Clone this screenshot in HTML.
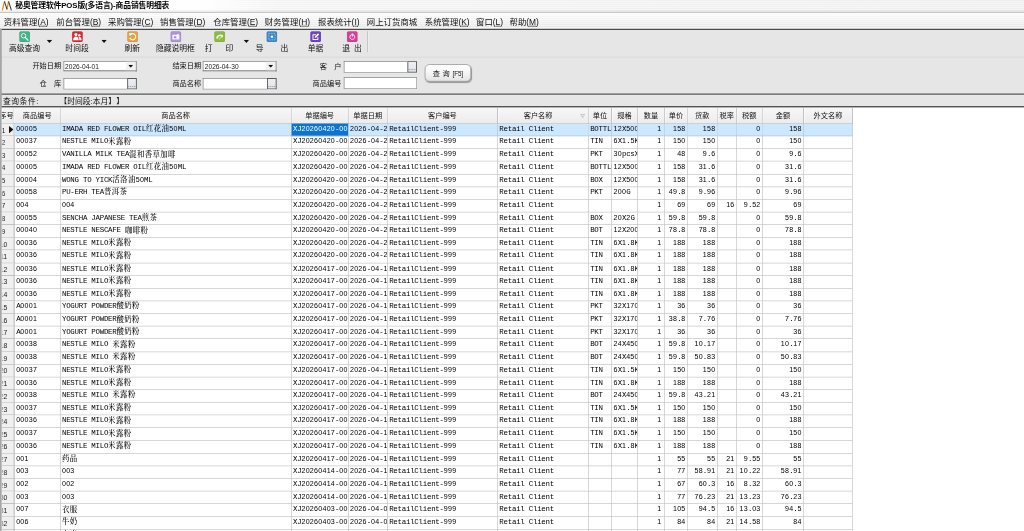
<!DOCTYPE html>
<html lang="zh-CN">
<head>
<meta charset="utf-8">
<title>秘奥管理软件POS版(多语言)-商品销售明细表</title>
<style>
html,body{margin:0;padding:0;background:#fff;}
body{width:1024px;height:531px;overflow:hidden;position:relative;}
#app{position:absolute;left:0;top:0;width:1706.67px;height:885px;transform:scale(0.6);transform-origin:0 0;overflow:hidden;background:#fff;filter:contrast(1);
 font-family:"Liberation Sans","Noto Sans CJK SC",sans-serif;color:#000;}
#app div,#app span{box-sizing:border-box;}
.abs{position:absolute;}
#title{left:0;top:0;width:100%;height:20.0px;background:linear-gradient(rgba(0,0,0,0) 0,rgba(0,0,0,0) 78%,rgba(0,0,0,.09) 100%),repeating-linear-gradient(rgba(255,255,255,0) 0,rgba(255,255,255,0) 1.7px,rgba(255,255,255,.5) 1.7px,rgba(255,255,255,.5) 3.4px),linear-gradient(to right,#fefefe 0,#fefefe 20%,#f3f3f4 27%,#eeeeef 100%);}
#title .txt{position:absolute;left:25.33px;top:0;height:20.0px;line-height:20.0px;font-size:13px;font-weight:bold;white-space:nowrap;letter-spacing:-0.2px;}
#menubar{left:0;top:20.0px;width:100%;height:28.17px;
 background:repeating-linear-gradient(rgba(255,255,255,0) 0,rgba(255,255,255,0) 1.7px,rgba(255,255,255,.55) 1.7px,rgba(255,255,255,.55) 3.4px),linear-gradient(#fdfdfd,#e4e4e4);}
#menubar .mi{position:absolute;top:0;height:28.17px;line-height:32.67px;font-size:14px;white-space:nowrap;color:#111;}
#menubar u{text-decoration:underline;text-underline-offset:2px;}
#tb{left:0;top:47.83px;width:100%;height:46.67px;background:#e6e6e6;}
.tbl{position:absolute;font-size:13px;white-space:pre;line-height:16px;height:16px;color:#111;}
.ico{position:absolute;width:18.33px;height:18.33px;border-radius:2.5px;}
.arr{position:absolute;width:9.6px;height:5.4px;background:#111;clip-path:polygon(0 0,100% 0,50% 100%);}
#flt{left:0;top:94.0px;width:100%;height:63.33px;background:#e6e6e6;}
.lab{position:absolute;font-size:12px;white-space:pre;text-align:right;line-height:16px;height:16px;color:#111;}
.inp{position:absolute;background:#fff;border:1px solid #6c6c6c;border-bottom-color:#858585;border-right-color:#858585;font-size:11px;line-height:16.4px;padding-left:2px;font-family:"Liberation Sans",sans-serif;color:#222;}
.btn{position:absolute;background:linear-gradient(#f4f4f4,#dcdcdc);border:1px solid #777;}
.btn .dots{position:absolute;left:0;right:0;bottom:3.4px;text-align:center;font-size:10px;font-weight:bold;line-height:8px;letter-spacing:0.4px;color:#6a7080;}
#cond{left:0;top:156.67px;width:100%;height:23.33px;background:#e6e6e6;font-size:13px;}
#cond span{position:absolute;top:0;line-height:23.17px;white-space:pre;color:#111;}
#lb{left:0;top:47.83px;width:2.5px;height:900px;background:#a6a6a6;}
#grid{left:0;top:180.0px;width:100%;height:800px;background:#fff;overflow:hidden;
 font-family:"Liberation Mono","Noto Serif CJK SC",monospace;font-size:12.4px;letter-spacing:-0.44px;color:#000;}
#grid .c{font-family:"Liberation Serif","Noto Serif CJK SC",serif;font-size:12.4px;letter-spacing:0.6px;font-weight:500;line-height:0;position:relative;top:0.4px;}
#grid .g{font-family:"Liberation Sans",sans-serif;font-size:11.8px;letter-spacing:0.44px;line-height:0;}
.hd{position:absolute;top:0;height:26.0px;background:linear-gradient(#f7f7f7,#ececec);border-right:1px solid #9c9c9c;border-bottom:1px solid #9c9c9c;
 font-family:"Liberation Sans","Noto Sans CJK SC",sans-serif;font-size:12px;letter-spacing:0;text-align:center;line-height:26.67px;white-space:nowrap;overflow:hidden;color:#111;box-shadow:inset 1px 0 0 #fff;}
.r{position:absolute;left:0;width:1420.83px;height:21.14px;}
.r i{font-style:normal;position:absolute;top:0;height:21.14px;line-height:16px;padding:1px 2.4px 0 2.6px;border-right:1px solid #bcbcbc;border-bottom:1px solid #bcbcbc;white-space:pre;overflow:hidden;box-sizing:border-box;}
.r i.rt{text-align:right;}
.r i.n{background:#f0f0f0;border-right:1px solid #909090;border-bottom:1px solid #a4a4a4;font-family:"Liberation Sans",sans-serif;font-size:11.5px;letter-spacing:0;padding:0;line-height:17px;color:#222;}
.r i.n s{text-decoration:none;position:absolute;left:1.9px;top:0;right:0;bottom:0;overflow:hidden;}
.r i.n b{font-weight:normal;position:absolute;left:1.5px;top:2.6px;transform:translateX(-50%);}
.r.sel i{background:#cce8ff;}
.r.sel i.n{background:#f0f0f0;}
.r.sel i.cur{background:#0b74d6;color:#fff;}
.tri{position:absolute;width:7.4px;height:12.4px;background:#111;clip-path:polygon(0 0,100% 50%,0 100%);}
</style>
</head>
<body>
<div id="app">

<div id="title" class="abs">
<svg class="abs" style="left:3.33px;top:1.0px" width="17.5" height="18.0" viewBox="0 0 20 20"><path d="M1 18.4 L5.1 1.2 M9.9 16.3 L12.9 1.2" fill="none" stroke="#f28a1e" stroke-width="2.5"/><path d="M5.1 1.2 L9.9 16.3 M12.9 1.2 L18.3 18.4" fill="none" stroke="#3c4048" stroke-width="2.1"/></svg>
<div class="txt">秘奥管理软件POS版(多语言)-商品销售明细表</div>
</div>
<div id="menubar" class="abs">
<span class="mi" style="left:6.33px">资料管理(<u>A</u>)</span>
<span class="mi" style="left:93.83px">前台管理(<u>B</u>)</span>
<span class="mi" style="left:180.0px">采购管理(<u>C</u>)</span>
<span class="mi" style="left:266.67px">销售管理(<u>D</u>)</span>
<span class="mi" style="left:355.5px">仓库管理(<u>E</u>)</span>
<span class="mi" style="left:441.33px">财务管理(<u>H</u>)</span>
<span class="mi" style="left:530.0px">报表统计(<u>I</u>)</span>
<span class="mi" style="left:611.33px">网上订货商城</span>
<span class="mi" style="left:708.0px">系统管理(<u>K</u>)</span>
<span class="mi" style="left:793.33px">窗口(<u>L</u>)</span>
<span class="mi" style="left:849.17px">帮助(<u>M</u>)</span>
</div>
<div id="tb" class="abs">
<svg class="ico" style="left:31.83px;top:4.33px" viewBox="0 0 18 18"><rect x="0.5" y="0.5" width="17" height="17" rx="2.2" fill="#3fb588" stroke="#34a278" stroke-width="1"/><circle cx="7.2" cy="7.4" r="3.7" fill="none" stroke="#fff" stroke-width="1.35"/><path d="M10 10.4 L14.2 14.4" stroke="#fff" stroke-width="2.1" stroke-linecap="round"/></svg>
<div class="tbl" style="left:5.0px;width:71.67px;top:25.13px;text-align:center">高级查询</div>
<div class="arr" style="left:77.67px;top:18.33px"></div>
<svg class="ico" style="left:120.17px;top:4.33px" viewBox="0 0 18 18"><rect x="0.5" y="0.5" width="17" height="17" rx="2.2" fill="#dc2631" stroke="#c41f2a" stroke-width="1"/><circle cx="6.4" cy="5.6" r="2.5" fill="#fff"/><path d="M1.8 14.8 C2 11 3.8 8.8 6.4 8.8 C9 8.8 10.8 11 11 14.8 Z" fill="#fff"/><circle cx="12" cy="6.6" r="2" fill="#fff"/><path d="M10.6 9.4 C13.8 8.6 15.6 10.6 15.8 14.8 L12 14.8 C12 12.6 11.6 10.8 10.6 9.4 Z" fill="#fff"/></svg>
<div class="tbl" style="left:99.33px;width:58.17px;top:25.13px;text-align:center">时间段</div>
<div class="arr" style="left:168.67px;top:18.33px"></div>
<svg class="ico" style="left:211.67px;top:4.33px" viewBox="0 0 18 18"><rect x="0.5" y="0.5" width="17" height="17" rx="2.2" fill="#dea447" stroke="#c88f33" stroke-width="1"/><path d="M5.6 5.2 A5 5 0 1 1 4.2 10.8" fill="none" stroke="#fff" stroke-width="1.8"/><path d="M3 2.8 L8.2 4 L4.4 7.8 Z" fill="#fff"/></svg>
<div class="tbl" style="left:198.33px;width:44.0px;top:25.13px;text-align:center">刷新</div>
<svg class="ico" style="left:283.83px;top:4.33px" viewBox="0 0 18 18"><rect x="0.5" y="0.5" width="17" height="17" rx="2.2" fill="#af95d5" stroke="#977cc3" stroke-width="1"/><path d="M3.2 6 H10.6 V4.4 H13.4 V6 H14.8 V13.6 H3.2 Z" fill="#fff" fill-opacity="0.9"/><circle cx="7.6" cy="9.8" r="2" fill="#af95d5"/></svg>
<div class="tbl" style="left:250.0px;width:84.67px;top:25.13px;text-align:center">隐藏说明框</div>
<svg class="ico" style="left:356.67px;top:4.33px" viewBox="0 0 18 18"><rect x="0.5" y="0.5" width="17" height="17" rx="2.2" fill="#8bbb3d" stroke="#78a62f" stroke-width="1"/><path d="M3.4 9.6 C4.6 5.6 11.4 4.2 14.6 6.8 L14.2 10 L11.6 10.4 L11.2 8.4 C9.6 7.8 7.8 8.2 6.6 9.2 L6.8 11.6 L4 12.6 Z" fill="#fff" fill-opacity="0.85"/><path d="M7.6 13.6 L11.8 9.6" stroke="#fff" stroke-width="1.1"/></svg>
<div class="tbl" style="left:331.67px;width:66.67px;top:25.13px;text-align:center">打<span style="margin-left:21.8px">印</span></div>
<div class="arr" style="left:405.83px;top:18.33px"></div>
<svg class="ico" style="left:444.0px;top:4.33px" viewBox="0 0 18 18"><rect x="0.5" y="0.5" width="17" height="17" rx="2.2" fill="#3f89ca" stroke="#3478b6" stroke-width="1"/><rect x="3.8" y="3.8" width="10.4" height="10.4" fill="none" stroke="#8fc0ea" stroke-width="1.4" stroke-dasharray="2.4 1.6"/><rect x="7.3" y="7.3" width="3.4" height="3.4" fill="#fff"/></svg>
<div class="tbl" style="left:416.67px;width:73.17px;top:25.13px;text-align:center">导<span style="margin-left:28.3px">出</span></div>
<svg class="ico" style="left:516.83px;top:4.33px" viewBox="0 0 18 18"><rect x="0.5" y="0.5" width="17" height="17" rx="2.2" fill="#6e41c5" stroke="#5d33b0" stroke-width="1"/><path d="M3.8 5 H9.4 V6.5 H5.3 V12.8 H11.8 V9.4 H13.3 V14.3 H3.8 Z" fill="#fff"/><path d="M7.4 11 L7.9 8.6 L12.8 3.4 L14.7 5.2 L9.8 10.4 Z" fill="#fff"/></svg>
<div class="tbl" style="left:503.16999999999996px;width:45.5px;top:25.13px;text-align:center">单据</div>
<svg class="ico" style="left:577.83px;top:4.33px" viewBox="0 0 18 18"><rect x="0.5" y="0.5" width="17" height="17" rx="2.2" fill="#d73e98" stroke="#c23088" stroke-width="1"/><path d="M7.3 5.5 A4.1 4.1 0 1 0 10.7 5.5" fill="none" stroke="#fff" stroke-width="1.5" stroke-linecap="round"/><path d="M9 4.2 V8.4" stroke="#fff" stroke-width="1.5" stroke-linecap="round"/></svg>
<div class="tbl" style="left:560.5px;width:52.5px;top:25.13px;text-align:center">退<span style="margin-left:6.8px">出</span></div>
<div class="abs" style="left:611.5px;top:3.83px;width:1.4px;height:35.67px;background:#b0b0b0;box-shadow:1.2px 0 0 #f4f4f4"></div>
</div>
<div id="flt" class="abs">
<div class="lab" style="left:22.0px;width:80px;top:8.4px">开始日期</div>
<div class="inp" style="left:105.5px;top:8.0px;width:122.33px;height:17.33px;border-bottom:2px solid #8a8a8a;border-right:2px solid #8a8a8a">2026-04-01</div>
<div class="btn" style="left:209.83px;top:9.0px;width:16.0px;height:14.329999999999998px;border:none;background:#f1f1f1"><div class="arr" style="left:3.7px;top:4.764999999999999px;width:8.6px;height:5px"></div></div>
<div class="lab" style="left:255.32999999999998px;width:80px;top:8.4px">结束日期</div>
<div class="inp" style="left:338.33px;top:8.0px;width:122.83px;height:17.33px;border-bottom:2px solid #8a8a8a;border-right:2px solid #8a8a8a">2026-04-30</div>
<div class="btn" style="left:443.17px;top:9.0px;width:16.0px;height:14.329999999999998px;border:none;background:#f1f1f1"><div class="arr" style="left:3.7px;top:4.764999999999999px;width:8.6px;height:5px"></div></div>
<div class="lab" style="left:489.0px;width:80px;top:9.23px">客<span style="margin-left:12px">户</span></div>
<div class="inp" style="left:572.5px;top:7.83px;width:122.33px;height:19.5px"></div>
<div class="btn" style="left:678.83px;top:7.83px;width:16.0px;height:19.5px;background:linear-gradient(#eff0f3,#dfe2e8);border:none;box-shadow:inset 0 0 0 1.5px #5a5a5a"><span class="dots">....</span></div>
<div class="lab" style="left:22.0px;width:80px;top:38.23px">仓<span style="margin-left:12px">库</span></div>
<div class="inp" style="left:105.5px;top:36.33px;width:122.33px;height:19.0px"></div>
<div class="btn" style="left:211.83px;top:36.33px;width:16.0px;height:19.0px;background:linear-gradient(#eff0f3,#dfe2e8);border:none;box-shadow:inset 0 0 0 1.5px #5a5a5a"><span class="dots">....</span></div>
<div class="lab" style="left:255.32999999999998px;width:80px;top:38.23px">商品名称</div>
<div class="inp" style="left:338.33px;top:36.33px;width:122.83px;height:19.0px"></div>
<div class="btn" style="left:445.17px;top:36.33px;width:16.0px;height:19.0px;background:linear-gradient(#eff0f3,#dfe2e8);border:none;box-shadow:inset 0 0 0 1.5px #5a5a5a"><span class="dots">....</span></div>
<div class="lab" style="left:489.0px;width:80px;top:37.57px">商品编号</div>
<div class="inp" style="left:572.5px;top:34.5px;width:122.33px;height:19.25px"></div>
<div class="abs" style="left:707.67px;top:13.33px;width:77.67px;height:28.33px;border:1.4px solid #868686;border-radius:8px;background:linear-gradient(#ffffff,#f4f4f4 55%,#e3e3e3);box-shadow:0.6px 1.4px 1.6px rgba(0,0,0,.35);text-align:center;font-size:12px;padding-top:1.8px;line-height:24.93px;white-space:pre;color:#111">查<span style="margin-left:4.2px">询</span><span style="font-size:10.5px;letter-spacing:-0.2px;margin-left:4.6px;position:relative;top:-0.6px">[F5]</span></div>
</div>
<div id="cond" class="abs"><span style="left:4.83px;letter-spacing:0.9px">查询条件:</span><span style="left:99.0px;text-spacing-trim:space-all">【时间段:本月】】</span></div>
<div class="abs" style="left:0;top:19.5px;width:100%;height:1.67px;background:#a4a4a4"></div>
<div class="abs" style="left:0;top:47.67px;width:100%;height:2.17px;background:#484848"></div>
<div class="abs" style="left:0;top:93.5px;width:100%;height:2.0px;background:#d9d9d9"></div>
<div class="abs" style="left:0;top:155.75px;width:100%;height:2.08px;background:#3a3a3a"></div>
<div class="abs" style="left:0;top:157.83px;width:100%;height:1.0px;background:#f0f0f0"></div>
<div class="abs" style="left:0;top:177.0px;width:100%;height:2.0px;background:#303030"></div>
<div class="abs" style="left:0;top:179.0px;width:100%;height:1.0px;background:#c4c4c4"></div>
<div id="lb" class="abs"></div>
<div id="grid" class="abs">
<div class="abs" style="left:0;top:0;width:2.5px;height:800px;background:#a6a6a6"></div>
<div class="hd" style="left:2.5px;width:21.83px;text-align:right;direction:rtl;padding-right:0.5px">序号</div>
<div class="hd" style="left:24.33px;width:76.33px">商品编号</div>
<div class="hd" style="left:100.67px;width:385.17px">商品名称</div>
<div class="hd" style="left:485.83px;width:94.83px">单据编号</div>
<div class="hd" style="left:580.67px;width:65.33px">单据日期</div>
<div class="hd" style="left:646.0px;width:183.67px">客户编号</div>
<div class="hd" style="left:829.67px;width:151.33px;padding-right:16px">客户名称<svg class="abs" style="right:5px;top:8.6px" width="8" height="8" viewBox="0 0 8 8"><path d="M0.8 1.6 H7.2 L4 7 Z" fill="none" stroke="#a2a2a2" stroke-width="0.9"/></svg></div>
<div class="hd" style="left:981.0px;width:39.0px">单位</div>
<div class="hd" style="left:1020.0px;width:42.67px">规格</div>
<div class="hd" style="left:1062.67px;width:45.33px">数量</div>
<div class="hd" style="left:1108.0px;width:38.0px">单价</div>
<div class="hd" style="left:1146.0px;width:49.83px">货款</div>
<div class="hd" style="left:1195.83px;width:31.83px">税率</div>
<div class="hd" style="left:1227.67px;width:43.33px">税额</div>
<div class="hd" style="left:1271.0px;width:68.67px">金额</div>
<div class="hd" style="left:1339.67px;width:81.5px">外文名称</div>
<div class="r sel" style="top:26.0px">
<i class="n" style="left:2.5px;width:21.83px"><s><b>1</b></s><span class="tri" style="left:12.5px;top:3.8px"></span></i>
<i style="left:24.33px;width:76.33px"><span class="g">00005</span></i>
<i style="left:100.67px;width:385.17px">IMADA RED FLOWER OIL<span class="c">红花油</span><span class="g">50</span>ML</i>
<i class="cur" style="left:485.83px;width:94.83px">XJ<span class="g">20260420</span>-<span class="g">0001</span></i>
<i style="left:580.67px;width:65.33px"><span class="g">2026</span>-<span class="g">04</span>-<span class="g">20</span></i>
<i style="left:646.0px;width:183.67px">RetailClient-<span class="g">999</span></i>
<i style="left:829.67px;width:151.33px">Retail Client</i>
<i style="left:981.0px;width:39.0px">BOTTLE</i>
<i style="left:1020.0px;width:42.67px"><span class="g">12</span>X<span class="g">500</span>ML</i>
<i class="rt" style="left:1062.67px;width:45.33px;padding-right:4.4px"><span class="g">1</span></i>
<i class="rt" style="left:1108.0px;width:38.0px"><span class="g">158</span></i>
<i class="rt" style="left:1146.0px;width:49.83px"><span class="g">158</span></i>
<i class="rt" style="left:1195.83px;width:31.83px"></i>
<i class="rt" style="left:1227.67px;width:43.33px"><span class="g">0</span></i>
<i class="rt" style="left:1271.0px;width:68.67px"><span class="g">158</span></i>
<i style="left:1339.67px;width:81.5px"></i>
</div>
<div class="r" style="top:47.14px">
<i class="n" style="left:2.5px;width:21.83px"><s><b>2</b></s></i>
<i style="left:24.33px;width:76.33px"><span class="g">00037</span></i>
<i style="left:100.67px;width:385.17px">NESTLE MILO<span class="c">米露粉</span></i>
<i style="left:485.83px;width:94.83px">XJ<span class="g">20260420</span>-<span class="g">0001</span></i>
<i style="left:580.67px;width:65.33px"><span class="g">2026</span>-<span class="g">04</span>-<span class="g">20</span></i>
<i style="left:646.0px;width:183.67px">RetailClient-<span class="g">999</span></i>
<i style="left:829.67px;width:151.33px">Retail Client</i>
<i style="left:981.0px;width:39.0px">TIN</i>
<i style="left:1020.0px;width:42.67px"><span class="g">6</span>X<span class="g">1</span>.<span class="g">5</span>KG</i>
<i class="rt" style="left:1062.67px;width:45.33px;padding-right:4.4px"><span class="g">1</span></i>
<i class="rt" style="left:1108.0px;width:38.0px"><span class="g">150</span></i>
<i class="rt" style="left:1146.0px;width:49.83px"><span class="g">150</span></i>
<i class="rt" style="left:1195.83px;width:31.83px"></i>
<i class="rt" style="left:1227.67px;width:43.33px"><span class="g">0</span></i>
<i class="rt" style="left:1271.0px;width:68.67px"><span class="g">150</span></i>
<i style="left:1339.67px;width:81.5px"></i>
</div>
<div class="r" style="top:68.28px">
<i class="n" style="left:2.5px;width:21.83px"><s><b>3</b></s></i>
<i style="left:24.33px;width:76.33px"><span class="g">00052</span></i>
<i style="left:100.67px;width:385.17px">VANILLA MILK TEA<span class="c">混和香草加啡</span></i>
<i style="left:485.83px;width:94.83px">XJ<span class="g">20260420</span>-<span class="g">0001</span></i>
<i style="left:580.67px;width:65.33px"><span class="g">2026</span>-<span class="g">04</span>-<span class="g">20</span></i>
<i style="left:646.0px;width:183.67px">RetailClient-<span class="g">999</span></i>
<i style="left:829.67px;width:151.33px">Retail Client</i>
<i style="left:981.0px;width:39.0px">PKT</i>
<i style="left:1020.0px;width:42.67px"><span class="g">30</span>pcsX<span class="g">20</span>G</i>
<i class="rt" style="left:1062.67px;width:45.33px;padding-right:4.4px"><span class="g">1</span></i>
<i class="rt" style="left:1108.0px;width:38.0px"><span class="g">48</span></i>
<i class="rt" style="left:1146.0px;width:49.83px"><span class="g">9</span>.<span class="g">6</span></i>
<i class="rt" style="left:1195.83px;width:31.83px"></i>
<i class="rt" style="left:1227.67px;width:43.33px"><span class="g">0</span></i>
<i class="rt" style="left:1271.0px;width:68.67px"><span class="g">9</span>.<span class="g">6</span></i>
<i style="left:1339.67px;width:81.5px"></i>
</div>
<div class="r" style="top:89.42px">
<i class="n" style="left:2.5px;width:21.83px"><s><b>4</b></s></i>
<i style="left:24.33px;width:76.33px"><span class="g">00005</span></i>
<i style="left:100.67px;width:385.17px">IMADA RED FLOWER OIL<span class="c">红花油</span><span class="g">50</span>ML</i>
<i style="left:485.83px;width:94.83px">XJ<span class="g">20260420</span>-<span class="g">0002</span></i>
<i style="left:580.67px;width:65.33px"><span class="g">2026</span>-<span class="g">04</span>-<span class="g">20</span></i>
<i style="left:646.0px;width:183.67px">RetailClient-<span class="g">999</span></i>
<i style="left:829.67px;width:151.33px">Retail Client</i>
<i style="left:981.0px;width:39.0px">BOTTLE</i>
<i style="left:1020.0px;width:42.67px"><span class="g">12</span>X<span class="g">500</span>ML</i>
<i class="rt" style="left:1062.67px;width:45.33px;padding-right:4.4px"><span class="g">1</span></i>
<i class="rt" style="left:1108.0px;width:38.0px"><span class="g">158</span></i>
<i class="rt" style="left:1146.0px;width:49.83px"><span class="g">31</span>.<span class="g">6</span></i>
<i class="rt" style="left:1195.83px;width:31.83px"></i>
<i class="rt" style="left:1227.67px;width:43.33px"><span class="g">0</span></i>
<i class="rt" style="left:1271.0px;width:68.67px"><span class="g">31</span>.<span class="g">6</span></i>
<i style="left:1339.67px;width:81.5px"></i>
</div>
<div class="r" style="top:110.57px">
<i class="n" style="left:2.5px;width:21.83px"><s><b>5</b></s></i>
<i style="left:24.33px;width:76.33px"><span class="g">00004</span></i>
<i style="left:100.67px;width:385.17px">WONG TO YICK<span class="c">活洛油</span><span class="g">50</span>ML</i>
<i style="left:485.83px;width:94.83px">XJ<span class="g">20260420</span>-<span class="g">0002</span></i>
<i style="left:580.67px;width:65.33px"><span class="g">2026</span>-<span class="g">04</span>-<span class="g">20</span></i>
<i style="left:646.0px;width:183.67px">RetailClient-<span class="g">999</span></i>
<i style="left:829.67px;width:151.33px">Retail Client</i>
<i style="left:981.0px;width:39.0px">BOX</i>
<i style="left:1020.0px;width:42.67px"><span class="g">12</span>X<span class="g">500</span>ML</i>
<i class="rt" style="left:1062.67px;width:45.33px;padding-right:4.4px"><span class="g">1</span></i>
<i class="rt" style="left:1108.0px;width:38.0px"><span class="g">158</span></i>
<i class="rt" style="left:1146.0px;width:49.83px"><span class="g">31</span>.<span class="g">6</span></i>
<i class="rt" style="left:1195.83px;width:31.83px"></i>
<i class="rt" style="left:1227.67px;width:43.33px"><span class="g">0</span></i>
<i class="rt" style="left:1271.0px;width:68.67px"><span class="g">31</span>.<span class="g">6</span></i>
<i style="left:1339.67px;width:81.5px"></i>
</div>
<div class="r" style="top:131.71px">
<i class="n" style="left:2.5px;width:21.83px"><s><b>6</b></s></i>
<i style="left:24.33px;width:76.33px"><span class="g">00058</span></i>
<i style="left:100.67px;width:385.17px">PU-ERH TEA<span class="c">普洱茶</span></i>
<i style="left:485.83px;width:94.83px">XJ<span class="g">20260420</span>-<span class="g">0002</span></i>
<i style="left:580.67px;width:65.33px"><span class="g">2026</span>-<span class="g">04</span>-<span class="g">20</span></i>
<i style="left:646.0px;width:183.67px">RetailClient-<span class="g">999</span></i>
<i style="left:829.67px;width:151.33px">Retail Client</i>
<i style="left:981.0px;width:39.0px">PKT</i>
<i style="left:1020.0px;width:42.67px"><span class="g">200</span>G</i>
<i class="rt" style="left:1062.67px;width:45.33px;padding-right:4.4px"><span class="g">1</span></i>
<i class="rt" style="left:1108.0px;width:38.0px"><span class="g">49</span>.<span class="g">8</span></i>
<i class="rt" style="left:1146.0px;width:49.83px"><span class="g">9</span>.<span class="g">96</span></i>
<i class="rt" style="left:1195.83px;width:31.83px"></i>
<i class="rt" style="left:1227.67px;width:43.33px"><span class="g">0</span></i>
<i class="rt" style="left:1271.0px;width:68.67px"><span class="g">9</span>.<span class="g">96</span></i>
<i style="left:1339.67px;width:81.5px"></i>
</div>
<div class="r" style="top:152.85px">
<i class="n" style="left:2.5px;width:21.83px"><s><b>7</b></s></i>
<i style="left:24.33px;width:76.33px"><span class="g">004</span></i>
<i style="left:100.67px;width:385.17px"><span class="g">004</span></i>
<i style="left:485.83px;width:94.83px">XJ<span class="g">20260420</span>-<span class="g">0003</span></i>
<i style="left:580.67px;width:65.33px"><span class="g">2026</span>-<span class="g">04</span>-<span class="g">20</span></i>
<i style="left:646.0px;width:183.67px">RetailClient-<span class="g">999</span></i>
<i style="left:829.67px;width:151.33px">Retail Client</i>
<i style="left:981.0px;width:39.0px"></i>
<i style="left:1020.0px;width:42.67px"></i>
<i class="rt" style="left:1062.67px;width:45.33px;padding-right:4.4px"><span class="g">1</span></i>
<i class="rt" style="left:1108.0px;width:38.0px"><span class="g">69</span></i>
<i class="rt" style="left:1146.0px;width:49.83px"><span class="g">69</span></i>
<i class="rt" style="left:1195.83px;width:31.83px"><span class="g">16</span></i>
<i class="rt" style="left:1227.67px;width:43.33px"><span class="g">9</span>.<span class="g">52</span></i>
<i class="rt" style="left:1271.0px;width:68.67px"><span class="g">69</span></i>
<i style="left:1339.67px;width:81.5px"></i>
</div>
<div class="r" style="top:173.99px">
<i class="n" style="left:2.5px;width:21.83px"><s><b>8</b></s></i>
<i style="left:24.33px;width:76.33px"><span class="g">00055</span></i>
<i style="left:100.67px;width:385.17px">SENCHA JAPANESE TEA<span class="c">煎茶</span></i>
<i style="left:485.83px;width:94.83px">XJ<span class="g">20260420</span>-<span class="g">0004</span></i>
<i style="left:580.67px;width:65.33px"><span class="g">2026</span>-<span class="g">04</span>-<span class="g">20</span></i>
<i style="left:646.0px;width:183.67px">RetailClient-<span class="g">999</span></i>
<i style="left:829.67px;width:151.33px">Retail Client</i>
<i style="left:981.0px;width:39.0px">BOX</i>
<i style="left:1020.0px;width:42.67px"><span class="g">20</span>X<span class="g">2</span>G</i>
<i class="rt" style="left:1062.67px;width:45.33px;padding-right:4.4px"><span class="g">1</span></i>
<i class="rt" style="left:1108.0px;width:38.0px"><span class="g">59</span>.<span class="g">8</span></i>
<i class="rt" style="left:1146.0px;width:49.83px"><span class="g">59</span>.<span class="g">8</span></i>
<i class="rt" style="left:1195.83px;width:31.83px"></i>
<i class="rt" style="left:1227.67px;width:43.33px"><span class="g">0</span></i>
<i class="rt" style="left:1271.0px;width:68.67px"><span class="g">59</span>.<span class="g">8</span></i>
<i style="left:1339.67px;width:81.5px"></i>
</div>
<div class="r" style="top:195.13px">
<i class="n" style="left:2.5px;width:21.83px"><s><b>9</b></s></i>
<i style="left:24.33px;width:76.33px"><span class="g">00040</span></i>
<i style="left:100.67px;width:385.17px">NESTLE NESCAFE <span class="c">咖啡粉</span></i>
<i style="left:485.83px;width:94.83px">XJ<span class="g">20260420</span>-<span class="g">0004</span></i>
<i style="left:580.67px;width:65.33px"><span class="g">2026</span>-<span class="g">04</span>-<span class="g">20</span></i>
<i style="left:646.0px;width:183.67px">RetailClient-<span class="g">999</span></i>
<i style="left:829.67px;width:151.33px">Retail Client</i>
<i style="left:981.0px;width:39.0px">BOT</i>
<i style="left:1020.0px;width:42.67px"><span class="g">12</span>X<span class="g">200</span>G</i>
<i class="rt" style="left:1062.67px;width:45.33px;padding-right:4.4px"><span class="g">1</span></i>
<i class="rt" style="left:1108.0px;width:38.0px"><span class="g">78</span>.<span class="g">8</span></i>
<i class="rt" style="left:1146.0px;width:49.83px"><span class="g">78</span>.<span class="g">8</span></i>
<i class="rt" style="left:1195.83px;width:31.83px"></i>
<i class="rt" style="left:1227.67px;width:43.33px"><span class="g">0</span></i>
<i class="rt" style="left:1271.0px;width:68.67px"><span class="g">78</span>.<span class="g">8</span></i>
<i style="left:1339.67px;width:81.5px"></i>
</div>
<div class="r" style="top:216.27px">
<i class="n" style="left:2.5px;width:21.83px"><s><b>10</b></s></i>
<i style="left:24.33px;width:76.33px"><span class="g">00036</span></i>
<i style="left:100.67px;width:385.17px">NESTLE MILO<span class="c">米露粉</span></i>
<i style="left:485.83px;width:94.83px">XJ<span class="g">20260420</span>-<span class="g">0005</span></i>
<i style="left:580.67px;width:65.33px"><span class="g">2026</span>-<span class="g">04</span>-<span class="g">20</span></i>
<i style="left:646.0px;width:183.67px">RetailClient-<span class="g">999</span></i>
<i style="left:829.67px;width:151.33px">Retail Client</i>
<i style="left:981.0px;width:39.0px">TIN</i>
<i style="left:1020.0px;width:42.67px"><span class="g">6</span>X<span class="g">1</span>.<span class="g">8</span>KG</i>
<i class="rt" style="left:1062.67px;width:45.33px;padding-right:4.4px"><span class="g">1</span></i>
<i class="rt" style="left:1108.0px;width:38.0px"><span class="g">188</span></i>
<i class="rt" style="left:1146.0px;width:49.83px"><span class="g">188</span></i>
<i class="rt" style="left:1195.83px;width:31.83px"></i>
<i class="rt" style="left:1227.67px;width:43.33px"><span class="g">0</span></i>
<i class="rt" style="left:1271.0px;width:68.67px"><span class="g">188</span></i>
<i style="left:1339.67px;width:81.5px"></i>
</div>
<div class="r" style="top:237.42px">
<i class="n" style="left:2.5px;width:21.83px"><s><b>11</b></s></i>
<i style="left:24.33px;width:76.33px"><span class="g">00036</span></i>
<i style="left:100.67px;width:385.17px">NESTLE MILO<span class="c">米露粉</span></i>
<i style="left:485.83px;width:94.83px">XJ<span class="g">20260420</span>-<span class="g">0006</span></i>
<i style="left:580.67px;width:65.33px"><span class="g">2026</span>-<span class="g">04</span>-<span class="g">20</span></i>
<i style="left:646.0px;width:183.67px">RetailClient-<span class="g">999</span></i>
<i style="left:829.67px;width:151.33px">Retail Client</i>
<i style="left:981.0px;width:39.0px">TIN</i>
<i style="left:1020.0px;width:42.67px"><span class="g">6</span>X<span class="g">1</span>.<span class="g">8</span>KG</i>
<i class="rt" style="left:1062.67px;width:45.33px;padding-right:4.4px"><span class="g">1</span></i>
<i class="rt" style="left:1108.0px;width:38.0px"><span class="g">188</span></i>
<i class="rt" style="left:1146.0px;width:49.83px"><span class="g">188</span></i>
<i class="rt" style="left:1195.83px;width:31.83px"></i>
<i class="rt" style="left:1227.67px;width:43.33px"><span class="g">0</span></i>
<i class="rt" style="left:1271.0px;width:68.67px"><span class="g">188</span></i>
<i style="left:1339.67px;width:81.5px"></i>
</div>
<div class="r" style="top:258.56px">
<i class="n" style="left:2.5px;width:21.83px"><s><b>12</b></s></i>
<i style="left:24.33px;width:76.33px"><span class="g">00036</span></i>
<i style="left:100.67px;width:385.17px">NESTLE MILO<span class="c">米露粉</span></i>
<i style="left:485.83px;width:94.83px">XJ<span class="g">20260417</span>-<span class="g">0001</span></i>
<i style="left:580.67px;width:65.33px"><span class="g">2026</span>-<span class="g">04</span>-<span class="g">17</span></i>
<i style="left:646.0px;width:183.67px">RetailClient-<span class="g">999</span></i>
<i style="left:829.67px;width:151.33px">Retail Client</i>
<i style="left:981.0px;width:39.0px">TIN</i>
<i style="left:1020.0px;width:42.67px"><span class="g">6</span>X<span class="g">1</span>.<span class="g">8</span>KG</i>
<i class="rt" style="left:1062.67px;width:45.33px;padding-right:4.4px"><span class="g">1</span></i>
<i class="rt" style="left:1108.0px;width:38.0px"><span class="g">188</span></i>
<i class="rt" style="left:1146.0px;width:49.83px"><span class="g">188</span></i>
<i class="rt" style="left:1195.83px;width:31.83px"></i>
<i class="rt" style="left:1227.67px;width:43.33px"><span class="g">0</span></i>
<i class="rt" style="left:1271.0px;width:68.67px"><span class="g">188</span></i>
<i style="left:1339.67px;width:81.5px"></i>
</div>
<div class="r" style="top:279.7px">
<i class="n" style="left:2.5px;width:21.83px"><s><b>13</b></s></i>
<i style="left:24.33px;width:76.33px"><span class="g">00036</span></i>
<i style="left:100.67px;width:385.17px">NESTLE MILO<span class="c">米露粉</span></i>
<i style="left:485.83px;width:94.83px">XJ<span class="g">20260417</span>-<span class="g">0002</span></i>
<i style="left:580.67px;width:65.33px"><span class="g">2026</span>-<span class="g">04</span>-<span class="g">17</span></i>
<i style="left:646.0px;width:183.67px">RetailClient-<span class="g">999</span></i>
<i style="left:829.67px;width:151.33px">Retail Client</i>
<i style="left:981.0px;width:39.0px">TIN</i>
<i style="left:1020.0px;width:42.67px"><span class="g">6</span>X<span class="g">1</span>.<span class="g">8</span>KG</i>
<i class="rt" style="left:1062.67px;width:45.33px;padding-right:4.4px"><span class="g">1</span></i>
<i class="rt" style="left:1108.0px;width:38.0px"><span class="g">188</span></i>
<i class="rt" style="left:1146.0px;width:49.83px"><span class="g">188</span></i>
<i class="rt" style="left:1195.83px;width:31.83px"></i>
<i class="rt" style="left:1227.67px;width:43.33px"><span class="g">0</span></i>
<i class="rt" style="left:1271.0px;width:68.67px"><span class="g">188</span></i>
<i style="left:1339.67px;width:81.5px"></i>
</div>
<div class="r" style="top:300.84px">
<i class="n" style="left:2.5px;width:21.83px"><s><b>14</b></s></i>
<i style="left:24.33px;width:76.33px"><span class="g">00036</span></i>
<i style="left:100.67px;width:385.17px">NESTLE MILO<span class="c">米露粉</span></i>
<i style="left:485.83px;width:94.83px">XJ<span class="g">20260417</span>-<span class="g">0003</span></i>
<i style="left:580.67px;width:65.33px"><span class="g">2026</span>-<span class="g">04</span>-<span class="g">17</span></i>
<i style="left:646.0px;width:183.67px">RetailClient-<span class="g">999</span></i>
<i style="left:829.67px;width:151.33px">Retail Client</i>
<i style="left:981.0px;width:39.0px">TIN</i>
<i style="left:1020.0px;width:42.67px"><span class="g">6</span>X<span class="g">1</span>.<span class="g">8</span>KG</i>
<i class="rt" style="left:1062.67px;width:45.33px;padding-right:4.4px"><span class="g">1</span></i>
<i class="rt" style="left:1108.0px;width:38.0px"><span class="g">188</span></i>
<i class="rt" style="left:1146.0px;width:49.83px"><span class="g">188</span></i>
<i class="rt" style="left:1195.83px;width:31.83px"></i>
<i class="rt" style="left:1227.67px;width:43.33px"><span class="g">0</span></i>
<i class="rt" style="left:1271.0px;width:68.67px"><span class="g">188</span></i>
<i style="left:1339.67px;width:81.5px"></i>
</div>
<div class="r" style="top:321.98px">
<i class="n" style="left:2.5px;width:21.83px"><s><b>15</b></s></i>
<i style="left:24.33px;width:76.33px">A<span class="g">0001</span></i>
<i style="left:100.67px;width:385.17px">YOGURT POWDER<span class="c">酸奶粉</span></i>
<i style="left:485.83px;width:94.83px">XJ<span class="g">20260417</span>-<span class="g">0004</span></i>
<i style="left:580.67px;width:65.33px"><span class="g">2026</span>-<span class="g">04</span>-<span class="g">17</span></i>
<i style="left:646.0px;width:183.67px">RetailClient-<span class="g">999</span></i>
<i style="left:829.67px;width:151.33px">Retail Client</i>
<i style="left:981.0px;width:39.0px">PKT</i>
<i style="left:1020.0px;width:42.67px"><span class="g">32</span>X<span class="g">170</span>G</i>
<i class="rt" style="left:1062.67px;width:45.33px;padding-right:4.4px"><span class="g">1</span></i>
<i class="rt" style="left:1108.0px;width:38.0px"><span class="g">36</span></i>
<i class="rt" style="left:1146.0px;width:49.83px"><span class="g">36</span></i>
<i class="rt" style="left:1195.83px;width:31.83px"></i>
<i class="rt" style="left:1227.67px;width:43.33px"><span class="g">0</span></i>
<i class="rt" style="left:1271.0px;width:68.67px"><span class="g">36</span></i>
<i style="left:1339.67px;width:81.5px"></i>
</div>
<div class="r" style="top:343.12px">
<i class="n" style="left:2.5px;width:21.83px"><s><b>16</b></s></i>
<i style="left:24.33px;width:76.33px">A<span class="g">0001</span></i>
<i style="left:100.67px;width:385.17px">YOGURT POWDER<span class="c">酸奶粉</span></i>
<i style="left:485.83px;width:94.83px">XJ<span class="g">20260417</span>-<span class="g">0005</span></i>
<i style="left:580.67px;width:65.33px"><span class="g">2026</span>-<span class="g">04</span>-<span class="g">17</span></i>
<i style="left:646.0px;width:183.67px">RetailClient-<span class="g">999</span></i>
<i style="left:829.67px;width:151.33px">Retail Client</i>
<i style="left:981.0px;width:39.0px">PKT</i>
<i style="left:1020.0px;width:42.67px"><span class="g">32</span>X<span class="g">170</span>G</i>
<i class="rt" style="left:1062.67px;width:45.33px;padding-right:4.4px"><span class="g">1</span></i>
<i class="rt" style="left:1108.0px;width:38.0px"><span class="g">38</span>.<span class="g">8</span></i>
<i class="rt" style="left:1146.0px;width:49.83px"><span class="g">7</span>.<span class="g">76</span></i>
<i class="rt" style="left:1195.83px;width:31.83px"></i>
<i class="rt" style="left:1227.67px;width:43.33px"><span class="g">0</span></i>
<i class="rt" style="left:1271.0px;width:68.67px"><span class="g">7</span>.<span class="g">76</span></i>
<i style="left:1339.67px;width:81.5px"></i>
</div>
<div class="r" style="top:364.27px">
<i class="n" style="left:2.5px;width:21.83px"><s><b>17</b></s></i>
<i style="left:24.33px;width:76.33px">A<span class="g">0001</span></i>
<i style="left:100.67px;width:385.17px">YOGURT POWDER<span class="c">酸奶粉</span></i>
<i style="left:485.83px;width:94.83px">XJ<span class="g">20260417</span>-<span class="g">0006</span></i>
<i style="left:580.67px;width:65.33px"><span class="g">2026</span>-<span class="g">04</span>-<span class="g">17</span></i>
<i style="left:646.0px;width:183.67px">RetailClient-<span class="g">999</span></i>
<i style="left:829.67px;width:151.33px">Retail Client</i>
<i style="left:981.0px;width:39.0px">PKT</i>
<i style="left:1020.0px;width:42.67px"><span class="g">32</span>X<span class="g">170</span>G</i>
<i class="rt" style="left:1062.67px;width:45.33px;padding-right:4.4px"><span class="g">1</span></i>
<i class="rt" style="left:1108.0px;width:38.0px"><span class="g">36</span></i>
<i class="rt" style="left:1146.0px;width:49.83px"><span class="g">36</span></i>
<i class="rt" style="left:1195.83px;width:31.83px"></i>
<i class="rt" style="left:1227.67px;width:43.33px"><span class="g">0</span></i>
<i class="rt" style="left:1271.0px;width:68.67px"><span class="g">36</span></i>
<i style="left:1339.67px;width:81.5px"></i>
</div>
<div class="r" style="top:385.41px">
<i class="n" style="left:2.5px;width:21.83px"><s><b>18</b></s></i>
<i style="left:24.33px;width:76.33px"><span class="g">00038</span></i>
<i style="left:100.67px;width:385.17px">NESTLE MILO <span class="c">米露粉</span></i>
<i style="left:485.83px;width:94.83px">XJ<span class="g">20260417</span>-<span class="g">0007</span></i>
<i style="left:580.67px;width:65.33px"><span class="g">2026</span>-<span class="g">04</span>-<span class="g">17</span></i>
<i style="left:646.0px;width:183.67px">RetailClient-<span class="g">999</span></i>
<i style="left:829.67px;width:151.33px">Retail Client</i>
<i style="left:981.0px;width:39.0px">BOT</i>
<i style="left:1020.0px;width:42.67px"><span class="g">24</span>X<span class="g">450</span>G</i>
<i class="rt" style="left:1062.67px;width:45.33px;padding-right:4.4px"><span class="g">1</span></i>
<i class="rt" style="left:1108.0px;width:38.0px"><span class="g">59</span>.<span class="g">8</span></i>
<i class="rt" style="left:1146.0px;width:49.83px"><span class="g">10</span>.<span class="g">17</span></i>
<i class="rt" style="left:1195.83px;width:31.83px"></i>
<i class="rt" style="left:1227.67px;width:43.33px"><span class="g">0</span></i>
<i class="rt" style="left:1271.0px;width:68.67px"><span class="g">10</span>.<span class="g">17</span></i>
<i style="left:1339.67px;width:81.5px"></i>
</div>
<div class="r" style="top:406.55px">
<i class="n" style="left:2.5px;width:21.83px"><s><b>19</b></s></i>
<i style="left:24.33px;width:76.33px"><span class="g">00038</span></i>
<i style="left:100.67px;width:385.17px">NESTLE MILO <span class="c">米露粉</span></i>
<i style="left:485.83px;width:94.83px">XJ<span class="g">20260417</span>-<span class="g">0007</span></i>
<i style="left:580.67px;width:65.33px"><span class="g">2026</span>-<span class="g">04</span>-<span class="g">17</span></i>
<i style="left:646.0px;width:183.67px">RetailClient-<span class="g">999</span></i>
<i style="left:829.67px;width:151.33px">Retail Client</i>
<i style="left:981.0px;width:39.0px">BOT</i>
<i style="left:1020.0px;width:42.67px"><span class="g">24</span>X<span class="g">450</span>G</i>
<i class="rt" style="left:1062.67px;width:45.33px;padding-right:4.4px"><span class="g">1</span></i>
<i class="rt" style="left:1108.0px;width:38.0px"><span class="g">59</span>.<span class="g">8</span></i>
<i class="rt" style="left:1146.0px;width:49.83px"><span class="g">50</span>.<span class="g">83</span></i>
<i class="rt" style="left:1195.83px;width:31.83px"></i>
<i class="rt" style="left:1227.67px;width:43.33px"><span class="g">0</span></i>
<i class="rt" style="left:1271.0px;width:68.67px"><span class="g">50</span>.<span class="g">83</span></i>
<i style="left:1339.67px;width:81.5px"></i>
</div>
<div class="r" style="top:427.69px">
<i class="n" style="left:2.5px;width:21.83px"><s><b>20</b></s></i>
<i style="left:24.33px;width:76.33px"><span class="g">00037</span></i>
<i style="left:100.67px;width:385.17px">NESTLE MILO<span class="c">米露粉</span></i>
<i style="left:485.83px;width:94.83px">XJ<span class="g">20260417</span>-<span class="g">0008</span></i>
<i style="left:580.67px;width:65.33px"><span class="g">2026</span>-<span class="g">04</span>-<span class="g">17</span></i>
<i style="left:646.0px;width:183.67px">RetailClient-<span class="g">999</span></i>
<i style="left:829.67px;width:151.33px">Retail Client</i>
<i style="left:981.0px;width:39.0px">TIN</i>
<i style="left:1020.0px;width:42.67px"><span class="g">6</span>X<span class="g">1</span>.<span class="g">5</span>KG</i>
<i class="rt" style="left:1062.67px;width:45.33px;padding-right:4.4px"><span class="g">1</span></i>
<i class="rt" style="left:1108.0px;width:38.0px"><span class="g">150</span></i>
<i class="rt" style="left:1146.0px;width:49.83px"><span class="g">150</span></i>
<i class="rt" style="left:1195.83px;width:31.83px"></i>
<i class="rt" style="left:1227.67px;width:43.33px"><span class="g">0</span></i>
<i class="rt" style="left:1271.0px;width:68.67px"><span class="g">150</span></i>
<i style="left:1339.67px;width:81.5px"></i>
</div>
<div class="r" style="top:448.83px">
<i class="n" style="left:2.5px;width:21.83px"><s><b>21</b></s></i>
<i style="left:24.33px;width:76.33px"><span class="g">00036</span></i>
<i style="left:100.67px;width:385.17px">NESTLE MILO<span class="c">米露粉</span></i>
<i style="left:485.83px;width:94.83px">XJ<span class="g">20260417</span>-<span class="g">0008</span></i>
<i style="left:580.67px;width:65.33px"><span class="g">2026</span>-<span class="g">04</span>-<span class="g">17</span></i>
<i style="left:646.0px;width:183.67px">RetailClient-<span class="g">999</span></i>
<i style="left:829.67px;width:151.33px">Retail Client</i>
<i style="left:981.0px;width:39.0px">TIN</i>
<i style="left:1020.0px;width:42.67px"><span class="g">6</span>X<span class="g">1</span>.<span class="g">8</span>KG</i>
<i class="rt" style="left:1062.67px;width:45.33px;padding-right:4.4px"><span class="g">1</span></i>
<i class="rt" style="left:1108.0px;width:38.0px"><span class="g">188</span></i>
<i class="rt" style="left:1146.0px;width:49.83px"><span class="g">188</span></i>
<i class="rt" style="left:1195.83px;width:31.83px"></i>
<i class="rt" style="left:1227.67px;width:43.33px"><span class="g">0</span></i>
<i class="rt" style="left:1271.0px;width:68.67px"><span class="g">188</span></i>
<i style="left:1339.67px;width:81.5px"></i>
</div>
<div class="r" style="top:469.98px">
<i class="n" style="left:2.5px;width:21.83px"><s><b>22</b></s></i>
<i style="left:24.33px;width:76.33px"><span class="g">00038</span></i>
<i style="left:100.67px;width:385.17px">NESTLE MILO <span class="c">米露粉</span></i>
<i style="left:485.83px;width:94.83px">XJ<span class="g">20260417</span>-<span class="g">0009</span></i>
<i style="left:580.67px;width:65.33px"><span class="g">2026</span>-<span class="g">04</span>-<span class="g">17</span></i>
<i style="left:646.0px;width:183.67px">RetailClient-<span class="g">999</span></i>
<i style="left:829.67px;width:151.33px">Retail Client</i>
<i style="left:981.0px;width:39.0px">BOT</i>
<i style="left:1020.0px;width:42.67px"><span class="g">24</span>X<span class="g">450</span>G</i>
<i class="rt" style="left:1062.67px;width:45.33px;padding-right:4.4px"><span class="g">1</span></i>
<i class="rt" style="left:1108.0px;width:38.0px"><span class="g">59</span>.<span class="g">8</span></i>
<i class="rt" style="left:1146.0px;width:49.83px"><span class="g">43</span>.<span class="g">21</span></i>
<i class="rt" style="left:1195.83px;width:31.83px"></i>
<i class="rt" style="left:1227.67px;width:43.33px"><span class="g">0</span></i>
<i class="rt" style="left:1271.0px;width:68.67px"><span class="g">43</span>.<span class="g">21</span></i>
<i style="left:1339.67px;width:81.5px"></i>
</div>
<div class="r" style="top:491.12px">
<i class="n" style="left:2.5px;width:21.83px"><s><b>23</b></s></i>
<i style="left:24.33px;width:76.33px"><span class="g">00037</span></i>
<i style="left:100.67px;width:385.17px">NESTLE MILO<span class="c">米露粉</span></i>
<i style="left:485.83px;width:94.83px">XJ<span class="g">20260417</span>-<span class="g">0009</span></i>
<i style="left:580.67px;width:65.33px"><span class="g">2026</span>-<span class="g">04</span>-<span class="g">17</span></i>
<i style="left:646.0px;width:183.67px">RetailClient-<span class="g">999</span></i>
<i style="left:829.67px;width:151.33px">Retail Client</i>
<i style="left:981.0px;width:39.0px">TIN</i>
<i style="left:1020.0px;width:42.67px"><span class="g">6</span>X<span class="g">1</span>.<span class="g">5</span>KG</i>
<i class="rt" style="left:1062.67px;width:45.33px;padding-right:4.4px"><span class="g">1</span></i>
<i class="rt" style="left:1108.0px;width:38.0px"><span class="g">150</span></i>
<i class="rt" style="left:1146.0px;width:49.83px"><span class="g">150</span></i>
<i class="rt" style="left:1195.83px;width:31.83px"></i>
<i class="rt" style="left:1227.67px;width:43.33px"><span class="g">0</span></i>
<i class="rt" style="left:1271.0px;width:68.67px"><span class="g">150</span></i>
<i style="left:1339.67px;width:81.5px"></i>
</div>
<div class="r" style="top:512.26px">
<i class="n" style="left:2.5px;width:21.83px"><s><b>24</b></s></i>
<i style="left:24.33px;width:76.33px"><span class="g">00036</span></i>
<i style="left:100.67px;width:385.17px">NESTLE MILO<span class="c">米露粉</span></i>
<i style="left:485.83px;width:94.83px">XJ<span class="g">20260417</span>-<span class="g">0009</span></i>
<i style="left:580.67px;width:65.33px"><span class="g">2026</span>-<span class="g">04</span>-<span class="g">17</span></i>
<i style="left:646.0px;width:183.67px">RetailClient-<span class="g">999</span></i>
<i style="left:829.67px;width:151.33px">Retail Client</i>
<i style="left:981.0px;width:39.0px">TIN</i>
<i style="left:1020.0px;width:42.67px"><span class="g">6</span>X<span class="g">1</span>.<span class="g">8</span>KG</i>
<i class="rt" style="left:1062.67px;width:45.33px;padding-right:4.4px"><span class="g">1</span></i>
<i class="rt" style="left:1108.0px;width:38.0px"><span class="g">188</span></i>
<i class="rt" style="left:1146.0px;width:49.83px"><span class="g">188</span></i>
<i class="rt" style="left:1195.83px;width:31.83px"></i>
<i class="rt" style="left:1227.67px;width:43.33px"><span class="g">0</span></i>
<i class="rt" style="left:1271.0px;width:68.67px"><span class="g">188</span></i>
<i style="left:1339.67px;width:81.5px"></i>
</div>
<div class="r" style="top:533.4px">
<i class="n" style="left:2.5px;width:21.83px"><s><b>25</b></s></i>
<i style="left:24.33px;width:76.33px"><span class="g">00037</span></i>
<i style="left:100.67px;width:385.17px">NESTLE MILO<span class="c">米露粉</span></i>
<i style="left:485.83px;width:94.83px">XJ<span class="g">20260417</span>-<span class="g">0010</span></i>
<i style="left:580.67px;width:65.33px"><span class="g">2026</span>-<span class="g">04</span>-<span class="g">17</span></i>
<i style="left:646.0px;width:183.67px">RetailClient-<span class="g">999</span></i>
<i style="left:829.67px;width:151.33px">Retail Client</i>
<i style="left:981.0px;width:39.0px">TIN</i>
<i style="left:1020.0px;width:42.67px"><span class="g">6</span>X<span class="g">1</span>.<span class="g">5</span>KG</i>
<i class="rt" style="left:1062.67px;width:45.33px;padding-right:4.4px"><span class="g">1</span></i>
<i class="rt" style="left:1108.0px;width:38.0px"><span class="g">150</span></i>
<i class="rt" style="left:1146.0px;width:49.83px"><span class="g">150</span></i>
<i class="rt" style="left:1195.83px;width:31.83px"></i>
<i class="rt" style="left:1227.67px;width:43.33px"><span class="g">0</span></i>
<i class="rt" style="left:1271.0px;width:68.67px"><span class="g">150</span></i>
<i style="left:1339.67px;width:81.5px"></i>
</div>
<div class="r" style="top:554.54px">
<i class="n" style="left:2.5px;width:21.83px"><s><b>26</b></s></i>
<i style="left:24.33px;width:76.33px"><span class="g">00036</span></i>
<i style="left:100.67px;width:385.17px">NESTLE MILO<span class="c">米露粉</span></i>
<i style="left:485.83px;width:94.83px">XJ<span class="g">20260417</span>-<span class="g">0010</span></i>
<i style="left:580.67px;width:65.33px"><span class="g">2026</span>-<span class="g">04</span>-<span class="g">17</span></i>
<i style="left:646.0px;width:183.67px">RetailClient-<span class="g">999</span></i>
<i style="left:829.67px;width:151.33px">Retail Client</i>
<i style="left:981.0px;width:39.0px">TIN</i>
<i style="left:1020.0px;width:42.67px"><span class="g">6</span>X<span class="g">1</span>.<span class="g">8</span>KG</i>
<i class="rt" style="left:1062.67px;width:45.33px;padding-right:4.4px"><span class="g">1</span></i>
<i class="rt" style="left:1108.0px;width:38.0px"><span class="g">188</span></i>
<i class="rt" style="left:1146.0px;width:49.83px"><span class="g">188</span></i>
<i class="rt" style="left:1195.83px;width:31.83px"></i>
<i class="rt" style="left:1227.67px;width:43.33px"><span class="g">0</span></i>
<i class="rt" style="left:1271.0px;width:68.67px"><span class="g">188</span></i>
<i style="left:1339.67px;width:81.5px"></i>
</div>
<div class="r" style="top:575.68px">
<i class="n" style="left:2.5px;width:21.83px"><s><b>27</b></s></i>
<i style="left:24.33px;width:76.33px"><span class="g">001</span></i>
<i style="left:100.67px;width:385.17px"><span class="c">药品</span></i>
<i style="left:485.83px;width:94.83px">XJ<span class="g">20260417</span>-<span class="g">0011</span></i>
<i style="left:580.67px;width:65.33px"><span class="g">2026</span>-<span class="g">04</span>-<span class="g">17</span></i>
<i style="left:646.0px;width:183.67px">RetailClient-<span class="g">999</span></i>
<i style="left:829.67px;width:151.33px">Retail Client</i>
<i style="left:981.0px;width:39.0px"></i>
<i style="left:1020.0px;width:42.67px"></i>
<i class="rt" style="left:1062.67px;width:45.33px;padding-right:4.4px"><span class="g">1</span></i>
<i class="rt" style="left:1108.0px;width:38.0px"><span class="g">55</span></i>
<i class="rt" style="left:1146.0px;width:49.83px"><span class="g">55</span></i>
<i class="rt" style="left:1195.83px;width:31.83px"><span class="g">21</span></i>
<i class="rt" style="left:1227.67px;width:43.33px"><span class="g">9</span>.<span class="g">55</span></i>
<i class="rt" style="left:1271.0px;width:68.67px"><span class="g">55</span></i>
<i style="left:1339.67px;width:81.5px"></i>
</div>
<div class="r" style="top:596.83px">
<i class="n" style="left:2.5px;width:21.83px"><s><b>28</b></s></i>
<i style="left:24.33px;width:76.33px"><span class="g">003</span></i>
<i style="left:100.67px;width:385.17px"><span class="g">003</span></i>
<i style="left:485.83px;width:94.83px">XJ<span class="g">20260414</span>-<span class="g">0001</span></i>
<i style="left:580.67px;width:65.33px"><span class="g">2026</span>-<span class="g">04</span>-<span class="g">14</span></i>
<i style="left:646.0px;width:183.67px">RetailClient-<span class="g">999</span></i>
<i style="left:829.67px;width:151.33px">Retail Client</i>
<i style="left:981.0px;width:39.0px"></i>
<i style="left:1020.0px;width:42.67px"></i>
<i class="rt" style="left:1062.67px;width:45.33px;padding-right:4.4px"><span class="g">1</span></i>
<i class="rt" style="left:1108.0px;width:38.0px"><span class="g">77</span></i>
<i class="rt" style="left:1146.0px;width:49.83px"><span class="g">58</span>.<span class="g">91</span></i>
<i class="rt" style="left:1195.83px;width:31.83px"><span class="g">21</span></i>
<i class="rt" style="left:1227.67px;width:43.33px"><span class="g">10</span>.<span class="g">22</span></i>
<i class="rt" style="left:1271.0px;width:68.67px"><span class="g">58</span>.<span class="g">91</span></i>
<i style="left:1339.67px;width:81.5px"></i>
</div>
<div class="r" style="top:617.97px">
<i class="n" style="left:2.5px;width:21.83px"><s><b>29</b></s></i>
<i style="left:24.33px;width:76.33px"><span class="g">002</span></i>
<i style="left:100.67px;width:385.17px"><span class="g">002</span></i>
<i style="left:485.83px;width:94.83px">XJ<span class="g">20260414</span>-<span class="g">0002</span></i>
<i style="left:580.67px;width:65.33px"><span class="g">2026</span>-<span class="g">04</span>-<span class="g">14</span></i>
<i style="left:646.0px;width:183.67px">RetailClient-<span class="g">999</span></i>
<i style="left:829.67px;width:151.33px">Retail Client</i>
<i style="left:981.0px;width:39.0px"></i>
<i style="left:1020.0px;width:42.67px"></i>
<i class="rt" style="left:1062.67px;width:45.33px;padding-right:4.4px"><span class="g">1</span></i>
<i class="rt" style="left:1108.0px;width:38.0px"><span class="g">67</span></i>
<i class="rt" style="left:1146.0px;width:49.83px"><span class="g">60</span>.<span class="g">3</span></i>
<i class="rt" style="left:1195.83px;width:31.83px"><span class="g">16</span></i>
<i class="rt" style="left:1227.67px;width:43.33px"><span class="g">8</span>.<span class="g">32</span></i>
<i class="rt" style="left:1271.0px;width:68.67px"><span class="g">60</span>.<span class="g">3</span></i>
<i style="left:1339.67px;width:81.5px"></i>
</div>
<div class="r" style="top:639.11px">
<i class="n" style="left:2.5px;width:21.83px"><s><b>30</b></s></i>
<i style="left:24.33px;width:76.33px"><span class="g">003</span></i>
<i style="left:100.67px;width:385.17px"><span class="g">003</span></i>
<i style="left:485.83px;width:94.83px">XJ<span class="g">20260414</span>-<span class="g">0003</span></i>
<i style="left:580.67px;width:65.33px"><span class="g">2026</span>-<span class="g">04</span>-<span class="g">14</span></i>
<i style="left:646.0px;width:183.67px">RetailClient-<span class="g">999</span></i>
<i style="left:829.67px;width:151.33px">Retail Client</i>
<i style="left:981.0px;width:39.0px"></i>
<i style="left:1020.0px;width:42.67px"></i>
<i class="rt" style="left:1062.67px;width:45.33px;padding-right:4.4px"><span class="g">1</span></i>
<i class="rt" style="left:1108.0px;width:38.0px"><span class="g">77</span></i>
<i class="rt" style="left:1146.0px;width:49.83px"><span class="g">76</span>.<span class="g">23</span></i>
<i class="rt" style="left:1195.83px;width:31.83px"><span class="g">21</span></i>
<i class="rt" style="left:1227.67px;width:43.33px"><span class="g">13</span>.<span class="g">23</span></i>
<i class="rt" style="left:1271.0px;width:68.67px"><span class="g">76</span>.<span class="g">23</span></i>
<i style="left:1339.67px;width:81.5px"></i>
</div>
<div class="r" style="top:660.25px">
<i class="n" style="left:2.5px;width:21.83px"><s><b>31</b></s></i>
<i style="left:24.33px;width:76.33px"><span class="g">007</span></i>
<i style="left:100.67px;width:385.17px"><span class="c">衣服</span></i>
<i style="left:485.83px;width:94.83px">XJ<span class="g">20260403</span>-<span class="g">0001</span></i>
<i style="left:580.67px;width:65.33px"><span class="g">2026</span>-<span class="g">04</span>-<span class="g">03</span></i>
<i style="left:646.0px;width:183.67px">RetailClient-<span class="g">999</span></i>
<i style="left:829.67px;width:151.33px">Retail Client</i>
<i style="left:981.0px;width:39.0px"></i>
<i style="left:1020.0px;width:42.67px"></i>
<i class="rt" style="left:1062.67px;width:45.33px;padding-right:4.4px"><span class="g">1</span></i>
<i class="rt" style="left:1108.0px;width:38.0px"><span class="g">105</span></i>
<i class="rt" style="left:1146.0px;width:49.83px"><span class="g">94</span>.<span class="g">5</span></i>
<i class="rt" style="left:1195.83px;width:31.83px"><span class="g">16</span></i>
<i class="rt" style="left:1227.67px;width:43.33px"><span class="g">13</span>.<span class="g">03</span></i>
<i class="rt" style="left:1271.0px;width:68.67px"><span class="g">94</span>.<span class="g">5</span></i>
<i style="left:1339.67px;width:81.5px"></i>
</div>
<div class="r" style="top:681.39px">
<i class="n" style="left:2.5px;width:21.83px"><s><b>32</b></s></i>
<i style="left:24.33px;width:76.33px"><span class="g">006</span></i>
<i style="left:100.67px;width:385.17px"><span class="c">牛奶</span></i>
<i style="left:485.83px;width:94.83px">XJ<span class="g">20260403</span>-<span class="g">0002</span></i>
<i style="left:580.67px;width:65.33px"><span class="g">2026</span>-<span class="g">04</span>-<span class="g">03</span></i>
<i style="left:646.0px;width:183.67px">RetailClient-<span class="g">999</span></i>
<i style="left:829.67px;width:151.33px">Retail Client</i>
<i style="left:981.0px;width:39.0px"></i>
<i style="left:1020.0px;width:42.67px"></i>
<i class="rt" style="left:1062.67px;width:45.33px;padding-right:4.4px"><span class="g">1</span></i>
<i class="rt" style="left:1108.0px;width:38.0px"><span class="g">84</span></i>
<i class="rt" style="left:1146.0px;width:49.83px"><span class="g">84</span></i>
<i class="rt" style="left:1195.83px;width:31.83px"><span class="g">21</span></i>
<i class="rt" style="left:1227.67px;width:43.33px"><span class="g">14</span>.<span class="g">58</span></i>
<i class="rt" style="left:1271.0px;width:68.67px"><span class="g">84</span></i>
<i style="left:1339.67px;width:81.5px"></i>
</div>
<div class="r" style="top:702.53px">
<i class="n" style="left:2.5px;width:21.83px"><s><b>33</b></s></i>
<i style="left:24.33px;width:76.33px"><span class="g">005</span></i>
<i style="left:100.67px;width:385.17px"><span class="c">大米</span></i>
<i style="left:485.83px;width:94.83px">XJ<span class="g">20260403</span>-<span class="g">0002</span></i>
<i style="left:580.67px;width:65.33px"><span class="g">2026</span>-<span class="g">04</span>-<span class="g">03</span></i>
<i style="left:646.0px;width:183.67px">RetailClient-<span class="g">999</span></i>
<i style="left:829.67px;width:151.33px">Retail Client</i>
<i style="left:981.0px;width:39.0px"></i>
<i style="left:1020.0px;width:42.67px"></i>
<i class="rt" style="left:1062.67px;width:45.33px;padding-right:4.4px"><span class="g">1</span></i>
<i class="rt" style="left:1108.0px;width:38.0px"><span class="g">84</span></i>
<i class="rt" style="left:1146.0px;width:49.83px"><span class="g">84</span></i>
<i class="rt" style="left:1195.83px;width:31.83px"><span class="g">21</span></i>
<i class="rt" style="left:1227.67px;width:43.33px"><span class="g">14</span>.<span class="g">58</span></i>
<i class="rt" style="left:1271.0px;width:68.67px"><span class="g">84</span></i>
<i style="left:1339.67px;width:81.5px"></i>
</div>
</div>
</div>
</body>
</html>
